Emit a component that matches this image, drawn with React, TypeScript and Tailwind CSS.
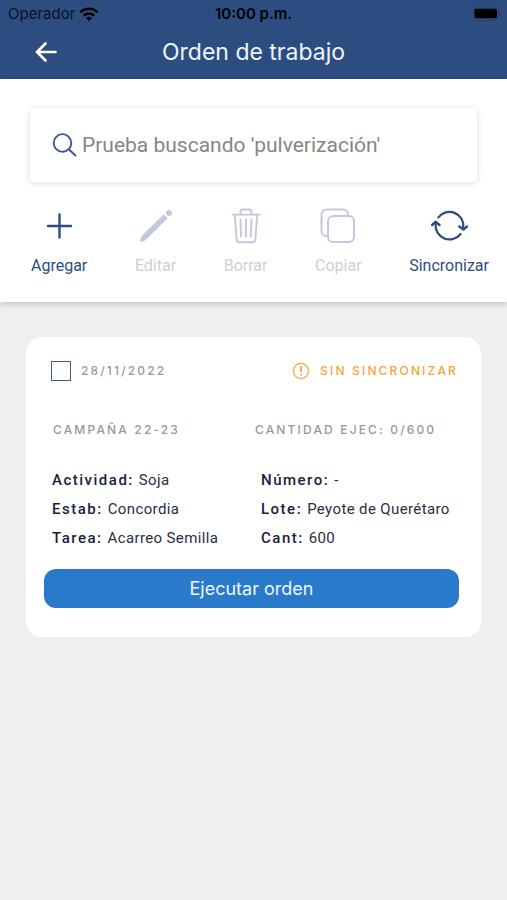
import type { ReactNode } from "react";

function StatusBar() {
  return (
    <div className="grid h-7 grid-cols-3 items-center px-2 text-[15px] text-[#0b1220]">
      <div className="flex items-center gap-1">
        <span>Operador</span>
        <svg viewBox="0 0 20 15" className="h-[15px] w-5" aria-hidden="true">
          <path d="M10 14.2 7 11.1a4.3 4.3 0 0 1 6 0Z" fill="#000" />
          <path d="M4.7 8.7a7.5 7.5 0 0 1 10.6 0M1.5 5.3a12 12 0 0 1 17 0" fill="none" stroke="#000" strokeWidth="2.5" />
        </svg>
      </div>
      <span className="text-center font-semibold whitespace-nowrap text-black">10:00 p.m.</span>
      <svg viewBox="0 0 30 14" className="-mr-1 h-[14px] w-[30px] justify-self-end" aria-hidden="true">
        <rect x="0.2" y="0" width="25.400" height="13.500" rx="3.5" fill="none" stroke="#25436f" />
        <rect x="1.500" y="1.800" width="22.500" height="9.5" rx="2" fill="#000" />
        <path d="M27 4.5a3 3 0 0 1 0 5Z" fill="#25436f" />
      </svg>
    </div>
  );
}

function ToolButton({ label, disabled, children }: { label: string; disabled?: boolean; children: ReactNode }) {
  return (
    <button
      type="button"
      disabled={disabled}
      className="flex flex-col items-center gap-2 text-[#2d4d81] disabled:text-[#c3c9dc]"
    >
      <svg viewBox="0 0 40 40" className="size-10" fill="none" stroke="currentColor" strokeLinecap="round" strokeLinejoin="round" aria-hidden="true">
        {children}
      </svg>
      <span className={disabled ? "text-base leading-6 text-[#cdcfd6]" : "text-base leading-6"}>{label}</span>
    </button>
  );
}

function Field({ name, value }: { name: string; value: string }) {
  return (
    <div className="flex gap-[5px] whitespace-nowrap">
      <dt className="font-medium tracking-widest">{name}:</dt>
      <dd className="tracking-wide text-[#2b2d42]">{value}</dd>
    </div>
  );
}

export default function App() {
  return (
    <div className="min-h-screen bg-[#efefef] font-[Roboto,sans-serif]">
      <header className="bg-[#2d4d81] font-[Inter,sans-serif]">
        <StatusBar />
        <div className="grid h-[51px] grid-cols-[72px_1fr_72px] items-center pb-[3px]">
          <button type="button" aria-label="Volver" className="justify-self-end pr-[15px] text-white">
            <svg viewBox="0 0 22 20" className="h-5 w-[22px]" fill="none" stroke="currentColor" strokeWidth="2.6" strokeLinecap="round" strokeLinejoin="round">
              <path d="M20.5 10H2M10.5 1.5 2 10l8.500 8.500" />
            </svg>
          </button>
          <h1 className="text-center text-[23px] leading-8 text-[#eef5ff]">Orden de trabajo</h1>
        </div>
      </header>

      <section className="bg-white pt-[29px] pb-6 shadow-[0_2px_6px_rgba(0,0,0,0.2)]">
        <label className="mx-[30px] flex h-[74px] items-center gap-1 rounded-sm bg-white pr-4 pl-[22px] shadow-[0_1px_6px_rgba(0,0,0,0.14)]">
          <svg viewBox="0 0 26 26" className="size-[26px] shrink-0" fill="none" stroke="#2d5596" strokeWidth="1.8" strokeLinecap="round" aria-hidden="true">
            <circle cx="10.500" cy="11" r="8.800" />
            <path d="m17 17.500 6.500 6" />
          </svg>
          <input
            type="search"
            aria-label="Buscar"
            placeholder="Prueba buscando 'pulverización'"
            className="min-w-0 flex-1 pt-px text-[21px] outline-none placeholder:text-[#868686]"
          />
        </label>

        <div className="mt-6 flex justify-between pr-[18px] pl-[31px]">
          <ToolButton label="Agregar">
            <path d="M20.500 8.500v23M9 20h23" strokeWidth="2.4" />
          </ToolButton>
          <ToolButton label="Editar" disabled>
            <path d="M27.800 9.300 30.700 12.200 10 32.800Q7.500 34.800 4.800 35 4.800 32.300 7 29.800Z" fill="currentColor" strokeWidth="1.500" />
            <circle cx="33" cy="7" r="3" fill="currentColor" stroke="none" />
          </ToolButton>
          <ToolButton label="Borrar" disabled>
            <path d="M6.500 8.600h27M8.800 9l1.800 24.500a2.800 2.800 0 0 0 2.800 2.700h13.200a2.800 2.800 0 0 0 2.800-2.700l1.800-24.500M14.500 8.500V6a2.500 2.500 0 0 1 2.500-2.500h6a2.500 2.500 0 0 1 2.500 2.500V8.500M20 13.500v17M14.500 13.500l.6 17M25.500 13.500l-.6 17" strokeWidth="1.900" />
          </ToolButton>
          <ToolButton label="Copiar" disabled>
            <rect x="10" y="10" width="26" height="26" rx="5" strokeWidth="2" />
            <path d="M30 10V8.500A5 5 0 0 0 25 3.500H8.500a5 5 0 0 0-5 5V25a5 5 0 0 0 5 5H10" strokeWidth="2" />
          </ToolButton>
          <ToolButton label="Sincronizar">
            <path d="M9.300 11.300A14 14 0 0 1 34.300 21.500M31.600 28A14 14 0 0 1 6.600 18" strokeWidth="2.200" />
            <path d="M30.300 20.600 34.400 23.500 37.900 20.600M3.100 19 6.600 15.800 10.500 19" strokeWidth="2.500" />
          </ToolButton>
        </div>
      </section>

      <main className="px-[26px] pt-[35px]">
        <article className="rounded-2xl bg-white pt-6 pr-[22px] pb-[29px] pl-[18px]">
          <div className="flex h-5 items-center justify-between pr-px pl-[7px] font-[Inter,sans-serif] text-xs font-medium tracking-[0.18em]">
            <label className="flex items-center gap-[10px] text-[#96989c]">
              <input type="checkbox" className="size-5 appearance-none border-[1.5px] border-[#3f5c93] bg-white checked:bg-[#3f5c93]" />
              28/11/2022
            </label>
            <p className="flex items-center gap-[10px] text-[#f3a53a]">
              <svg viewBox="0 0 18 18" className="size-[18px]" fill="none" stroke="currentColor" strokeWidth="1.300" aria-hidden="true">
                <circle cx="9" cy="9" r="7.600" />
                <path d="M9 4.300v5.700M9 11.700v1.800" strokeWidth="1.800" />
              </svg>
              SIN SINCRONIZAR
            </p>
          </div>

          <div className="mt-[39px] grid grid-cols-[202px_1fr] pl-[9px] font-[Inter,sans-serif] text-xs leading-5 font-medium tracking-[0.18em] whitespace-nowrap text-[#96989c]">
            <p>CAMPAÑA 22-23</p>
            <p>CANTIDAD EJEC: 0/600</p>
          </div>

          <dl className="mt-[26px] grid grid-cols-[209px_1fr] pl-2 text-[15px] leading-[29px] text-[#1b1d3a]">
            <Field name="Actividad" value="Soja" />
            <Field name="Número" value="-" />
            <Field name="Estab" value="Concordia" />
            <Field name="Lote" value="Peyote de Querétaro" />
            <Field name="Tarea" value="Acarreo Semilla" />
            <Field name="Cant" value="600" />
          </dl>

          <button type="button" className="mt-4 h-[39px] w-full rounded-xl bg-[#2a7acb] pt-px font-[Inter,sans-serif] text-lg text-[#eef6ff]">
            Ejecutar orden
          </button>
        </article>
      </main>
    </div>
  );
}
